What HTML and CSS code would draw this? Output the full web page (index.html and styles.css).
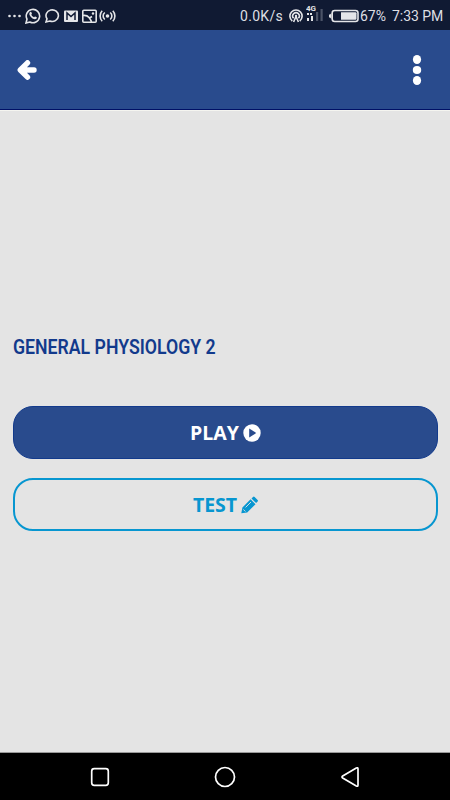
FILE: index.html
```
<!DOCTYPE html>
<html lang="en">
<head>
    <meta charset="UTF-8">
    <meta name="viewport" content="width=device-width, initial-scale=1.0">
    <title>General Physiology 2</title>
    <link rel="stylesheet" href="styles.css">
</head>
<body>
    <div class="status-bar">
        <div class="notifications">
            <svg class="dots" width="13" height="16" viewBox="0 0 13 16"><circle cx="1.5" cy="8" r="1.3"/><circle cx="6.5" cy="8" r="1.3"/><circle cx="11.5" cy="8" r="1.3"/></svg>
            <svg class="whatsapp" width="16" height="16" viewBox="0 0 16 16">
                <path class="line" d="M1 15l1-3.8A6.7 6.7 0 1 1 4.8 14z"/>
                <path d="M5.2 4.1c.5-.5 1-.3 1.2.2l.5 1.200c.1.4-.2.8-.6 1.200.6 1.200 1.500 2 2.800 2.600.4-.5.7-.9 1.100-.8l1.400.7c.5.3.3 1-.1 1.400-1 1-2.500.7-4-.2C5.900 9.300 4.800 8 4.400 6.600c-.2-1 .1-1.900.8-2.500z"/>
            </svg>
            <svg class="bubble" width="15" height="16" viewBox="0 0 15 16"><path class="line" d="M1 14l1-3.200A6.200 5.800 0 1 1 4.800 13z"/></svg>
            <svg class="mail" width="14" height="16" viewBox="0 0 14 16"><rect y="2.500" width="14" height="11.500" rx="1"/><path class="cut" d="M3 12V5l4 3.500L11 5v7"/></svg>
            <svg class="image" width="15" height="16" viewBox="0 0 15 16"><rect class="line" x=".8" y="2.200" width="13.400" height="12" rx="1"/><path class="line" d="M1 7.500q4-.5 6 2t2.500 4.500M7.500 10l2.500-1.500"/><circle cx="11" cy="5.500" r="1.200"/></svg>
            <svg class="wave" width="17" height="16" viewBox="0 0 17 16"><circle cx="8.500" cy="8" r="1.800"/><path class="line" d="M5.800 4.500a4.500 4.500 0 0 0 0 7M11.200 4.500a4.500 4.500 0 0 1 0 7M3.200 2.800a7.500 7.500 0 0 0 0 10.400M13.800 2.800a7.500 7.500 0 0 1 0 10.400"/></svg>
        </div>
        <div class="system">
            <span class="speed">0.0K/s</span>
            <svg class="hotspot" width="14" height="16" viewBox="0 0 14 16"><path class="line" d="M3.300 13a6.100 6.100 0 1 1 7.400 0M4.600 10.300a3.300 3.300 0 1 1 4.800 0"/><path class="line" d="M4.600 14L7 8.500 9.400 14"/><circle cx="7" cy="8" r="1.200"/></svg>
            <svg class="signal" width="18" height="20" viewBox="0 0 18 20">
                <text x="0" y="7.500">4G</text>
                <path d="M1 10h2v2H1zM4 10h2v2H4zM1 15h2v3H1zM5 13h2v5H5z"/>
                <path class="weak" d="M10 9h2.200v9H10zM14.500 6h2.200v12h-2.200z"/>
            </svg>
            <svg class="battery" width="30" height="14" viewBox="0 0 30 14"><path d="M0 5.500h1L2.500 4v6L1 8.500H0z"/><rect class="line" x="3.200" y="1.500" width="25.800" height="11" rx="2.500"/><path d="M12 3.200h14.500q1 0 1 1v5.600q0 1-1 1H12z"/></svg>
            <span class="percent">67%</span>
            <span class="clock">7:33 PM</span>
        </div>
    </div>
    <header>
        <svg class="back" width="20" height="20" viewBox="0 0 20 20"><path d="M10.500 2.800L3.300 10l7.200 7.200M4 10h13"/></svg>
        <svg class="menu" width="10" height="32" viewBox="0 0 10 32"><ellipse cx="5" cy="5.500" rx="4.100" ry="4.500"/><ellipse cx="5" cy="16" rx="4.200" ry="4"/><ellipse cx="5" cy="26.500" rx="4.100" ry="4.500"/></svg>
    </header>
    <main>
        <h1><span class="title">GENERAL PHYSIOLOGY 2</span></h1>
        <button class="btn btn-play">
            <span class="play-label">PLAY</span>
            <svg width="18" height="18" viewBox="0 0 18 18"><circle cx="9" cy="9" r="8.700"/><path class="triangle" d="M6.200 4.600L13.200 9l-7 4.400z"/></svg>
        </button>
        <button class="btn btn-test">
            <span class="test-label">TEST</span>
            <svg width="17" height="18" viewBox="0 0 17 18"><path d="M.3 17.300l1.100-5.800L9.600 3.300l4.900 4.900-8.300 8.200zM10.500 2.400l1.500-1.500q.8-.7 1.600 0l3 3q.7.700 0 1.500l-1.500 1.600z"/><path class="detail" d="M4.600 11.400l5.400-5.400M2.300 13.400l2.100 2.100"/></svg>
        </button>
    </main>
    <nav>
        <svg width="20" height="20" viewBox="0 0 20 20"><rect x="1.700" y="1.700" width="16.600" height="16.600" rx="2.500"/></svg>
        <svg width="22" height="22" viewBox="0 0 22 22"><circle cx="11" cy="11" r="9.500"/></svg>
        <svg width="20" height="22" viewBox="0 0 20 22"><path d="M18 3v16q0 1.800-1.700 1L2.700 12q-1.400-1 0-2L16.300 2q1.700-.8 1.700 1z"/></svg>
    </nav>
</body>
</html>
```

FILE: styles.css
```
body {
    margin: 0;
    height: 800px;
    display: flex;
    flex-direction: column;
    background-color: #e4e4e4;
    font-family: "Open Sans", sans-serif;
    overflow: hidden;
}
svg {
    display: block;
    flex: none;
}
.status-bar {
    height: 30px;
    box-sizing: border-box;
    padding: 1px 7px 0 8px;
    display: flex;
    justify-content: space-between;
    align-items: center;
    background-color: #101a33;
    color: #dedfe3;
    font-family: Roboto, sans-serif;
    font-size: 14px;
    white-space: nowrap;
}
.status-bar svg {
    fill: #e4e5e8;
}
.status-bar .line {
    fill: none;
    stroke: #e4e5e8;
    stroke-width: 1.6;
}
.status-bar .cut {
    fill: none;
    stroke: #101a33;
    stroke-width: 1.5;
}
.notifications, .system {
    display: flex;
    align-items: center;
}
.notifications {
    gap: 4px;
}
.wave {
    margin-left: -2px;
}
.speed {
    width: 49px;
    letter-spacing: 0.3px;
}
.signal {
    margin: -5px 5px 0 3px;
}
.signal text {
    font-size: 8px;
    font-weight: bold;
}
.signal .weak {
    fill: #4b5367;
}
.percent {
    width: 32px;
    margin-left: 1px;
}
.clock {
    width: 51px;
    letter-spacing: -0.05px;
}
header {
    height: 80px;
    box-sizing: border-box;
    padding: 0 28px 0 17px;
    display: flex;
    align-items: center;
    justify-content: space-between;
    background-color: #294b8d;
    border-bottom: 1px solid #001066;
    box-shadow: 0 1px #f5f5f0;
}
.back {
    fill: none;
    stroke: white;
    stroke-width: 5.4;
    stroke-linecap: round;
    stroke-linejoin: round;
}
.menu {
    fill: white;
}
main {
    flex: 1;
    padding: 225px 12px 0 13px;
}
h1 {
    margin: 0 0 46px;
    font-family: Roboto, sans-serif;
    font-size: 20px;
    line-height: 25px;
    font-weight: 600;
    color: #123a8c;
    white-space: nowrap;
}
.title {
    display: inline-block;
    transform: scaleX(0.885);
    transform-origin: left;
}
.btn {
    width: 100%;
    height: 53px;
    margin: 0 0 19px;
    padding: 0;
    display: flex;
    align-items: center;
    justify-content: center;
    gap: 4px;
    border-radius: 20px;
    font-family: "Open Sans", sans-serif;
    font-size: 19.5px;
    font-weight: 700;
}
.btn-play {
    background-color: #294b8d;
    border: 1px solid #123a8c;
    color: white;
}
.btn-play svg {
    fill: white;
}
.btn-play .triangle {
    fill: #294b8d;
}
.btn-test {
    background-color: transparent;
    border: 2px solid #0796d0;
    color: #0796d0;
}
.btn-test svg {
    fill: #0796d0;
}
.btn-test .detail {
    fill: none;
    stroke: #e4e4e4;
    stroke-width: 0.9;
}
nav {
    height: 48px;
    box-sizing: border-box;
    border-top: 1px solid #999;
    padding: 0 90px;
    display: flex;
    align-items: center;
    justify-content: space-between;
    background-color: black;
}
nav svg {
    fill: none;
    stroke: white;
    stroke-width: 1.7;
}
```
